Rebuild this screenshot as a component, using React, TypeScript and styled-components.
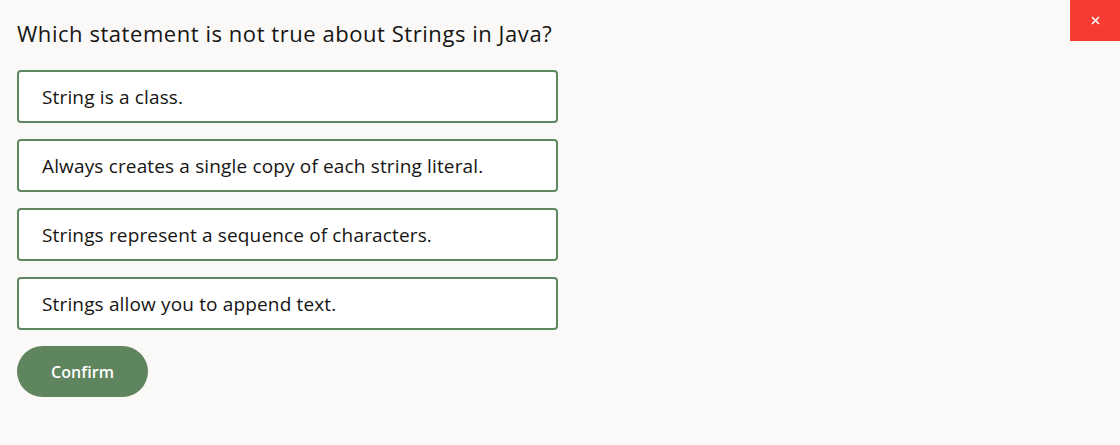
import React, { useState } from "react";
import styled, { createGlobalStyle } from "styled-components";

const GlobalStyle = createGlobalStyle`
	html, body {
		margin: 0;
		padding: 0;
		background: #fbf9f8;
		font-family: "Open Sans", "Liberation Sans", sans-serif;
		color: #161513;
	}
`;

const options = [
	"String is a class.",
	"Always creates a single copy of each string literal.",
	"Strings represent a sequence of characters.",
	"Strings allow you to append text.",
];

const App = () => {
	const [selected, setSelected] = useState<number | null>(null);

	return (
		<>
			<GlobalStyle />
			<Page>
				<CloseButton aria-label="Close">
					<svg width="9" height="9" viewBox="0 0 9 9">
						<path d="M1 1L8 8M8 1L1 8" stroke="#fff" strokeWidth="1.6" />
					</svg>
				</CloseButton>
				<Question>Which statement is not true about Strings in Java?</Question>
				<OptionList>
					{options.map((text, i) => (
						<Option
							key={text}
							$active={selected === i}
							onClick={() => setSelected(i)}
						>
							{text}
						</Option>
					))}
				</OptionList>
				<ConfirmButton>Confirm</ConfirmButton>
			</Page>
		</>
	);
};

export default App;

const Page = styled.div`
	position: relative;
	height: 445px;
	padding: 17px 17px 0;
	box-sizing: border-box;
`;

const CloseButton = styled.button`
	position: absolute;
	top: 0;
	right: 0;
	width: 50px;
	height: 41px;
	border: none;
	padding: 0;
	background: #f63c32;
	display: grid;
	place-items: center;
	cursor: pointer;
`;

const Question = styled.h1`
	margin: 0;
	font-size: 22px;
	font-weight: 400;
	line-height: 32px;
	letter-spacing: 0.55px;
`;

const OptionList = styled.div`
	display: flex;
	flex-direction: column;
	gap: 16px;
	margin-top: 21px;
	width: 541px;
`;

const Option = styled.div<{ $active: boolean }>`
	box-sizing: border-box;
	height: 53px;
	display: flex;
	align-items: center;
	padding: 0 23px;
	border: 2px solid #5e865f;
	border-radius: 4px;
	background: ${({ $active }) => ($active ? "#eef3ec" : "#fff")};
	font-size: 19px;
	letter-spacing: 0.15px;
	cursor: pointer;
`;

const ConfirmButton = styled.button`
	margin-top: 16px;
	width: 131px;
	height: 51px;
	border: none;
	border-radius: 26px;
	background: #5f855f;
	color: #fff;
	font-family: "Open Sans", "Liberation Sans", sans-serif;
	font-size: 16px;
	font-weight: 600;
	letter-spacing: 0.1px;
	cursor: pointer;
`;
